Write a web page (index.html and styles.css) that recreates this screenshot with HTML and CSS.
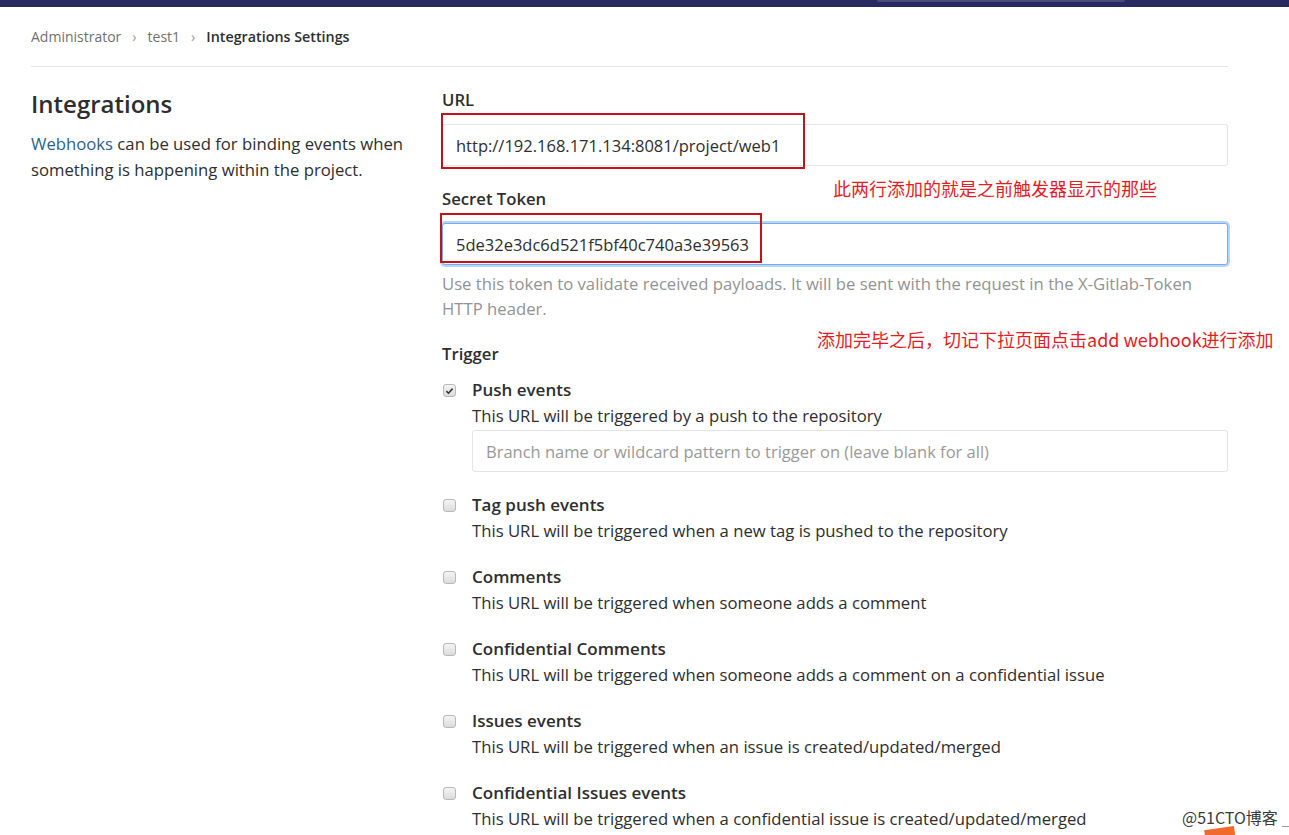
FILE: index.html
```html
<!DOCTYPE html>
<html lang="en">
<head>
<meta charset="utf-8">
<title>Integrations Settings</title>
<link rel="stylesheet" href="styles.css">
</head>
<body>
<header class="topbar"><div class="topbar-search"></div></header>
<div class="container">
  <nav class="breadcrumbs">
    <span class="crumb">Administrator</span>
    <span class="sep">&rsaquo;</span>
    <span class="crumb">test1</span>
    <span class="sep">&rsaquo;</span>
    <span class="crumb current">Integrations Settings</span>
  </nav>
  <div class="row">
    <aside class="side">
      <h4 class="side-title">Integrations</h4>
      <p class="side-text"><a class="link">Webhooks</a> can be used for binding events when something is happening within the project.</p>
    </aside>
    <form class="form">
      <div class="group">
        <label class="label">URL</label>
        <div class="input">http://192.168.171.134:8081/project/web1</div>
        <div class="redbox redbox-url"></div>
        <div class="note note-1">此两行添加的就是之前触发器显示的那些</div>
      </div>
      <div class="group group-token">
        <label class="label">Secret Token</label>
        <div class="input focused">5de32e3dc6d521f5bf40c740a3e39563</div>
        <div class="redbox redbox-token"></div>
        <p class="help">Use this token to validate received payloads. It will be sent with the request in the X-Gitlab-Token HTTP header.</p>
        <div class="note note-2">添加完毕之后，切记下拉页面点击add webhook进行添加</div>
      </div>
      <div class="label trigger">Trigger</div>
      <ul class="events">
        <li class="event">
          <span class="check checked"><svg viewBox="0 0 12 12" width="12" height="12"><path d="M2.6 6.2 L4.9 8.4 L9.4 3.4" fill="none" stroke="#333" stroke-width="1.7"/></svg></span>
          <div class="event-body">
            <div class="event-title">Push events</div>
            <div class="event-desc">This URL will be triggered by a push to the repository</div>
            <div class="input placeholder">Branch name or wildcard pattern to trigger on (leave blank for all)</div>
          </div>
        </li>
        <li class="event">
          <span class="check"></span>
          <div class="event-body">
            <div class="event-title">Tag push events</div>
            <div class="event-desc">This URL will be triggered when a new tag is pushed to the repository</div>
          </div>
        </li>
        <li class="event">
          <span class="check"></span>
          <div class="event-body">
            <div class="event-title">Comments</div>
            <div class="event-desc">This URL will be triggered when someone adds a comment</div>
          </div>
        </li>
        <li class="event">
          <span class="check"></span>
          <div class="event-body">
            <div class="event-title">Confidential Comments</div>
            <div class="event-desc">This URL will be triggered when someone adds a comment on a confidential issue</div>
          </div>
        </li>
        <li class="event">
          <span class="check"></span>
          <div class="event-body">
            <div class="event-title">Issues events</div>
            <div class="event-desc">This URL will be triggered when an issue is created/updated/merged</div>
          </div>
        </li>
        <li class="event">
          <span class="check"></span>
          <div class="event-body">
            <div class="event-title">Confidential Issues events</div>
            <div class="event-desc">This URL will be triggered when a confidential issue is created/updated/merged</div>
          </div>
        </li>
      </ul>
    </form>
  </div>
</div>
<div class="watermark">@51CTO博客</div>
<div class="wm-line"></div>
<div class="wm-logo"></div>
</body>
</html>
```
FILE: styles.css
```css
* { box-sizing: border-box; }
html, body { margin: 0; padding: 0; background: #fff; }
body {
  font-family: "Open Sans", "Noto Sans", "Noto Sans CJK SC", sans-serif;
  color: #2e2e2e;
  font-size: 16.7px;
  width: 1289px;
  height: 835px;
  overflow: hidden;
  position: relative;
}
.topbar {
  height: 7px;
  background: #292961;
  display: flex;
}
.topbar-search {
  margin-left: 877px;
  width: 248px;
  height: 2px;
  background: #4a4a7c;
  border-radius: 0 0 3px 3px;
}
.container {
  margin-left: 31px;
  width: 1197px;
}
.breadcrumbs {
  height: 60px;
  display: flex;
  align-items: center;
  gap: 9px;
  border-bottom: 1px solid #e5e5e5;
  font-size: 14px;
  padding-bottom: 1px;
}
.crumb { color: #707070; }
.crumb.current { color: #2e2e2e; font-weight: 600; font-size: 14.3px; }
.sep { color: #999; font-size: 14px; margin: 0 2px; }
.row {
  display: flex;
}
.side {
  width: 411px;
  padding-right: 20px;
}
.side-title {
  margin: 21px 0 11px;
  font-size: 24px;
  font-weight: 600;
  line-height: 32px;
  color: #2e2e2e;
}
.side-text {
  margin: 0;
  line-height: 26px;
  font-size: 16.7px;
}
.link { color: #2c5f8f; text-decoration: none; }
.form {
  width: 786px;
  margin: 0;
  padding-top: 21px;
}
.group { position: relative; }
.label {
  display: block;
  font-weight: 600;
  font-size: 16.7px;
  line-height: 24px;
  margin-bottom: 12px;
  color: #2e2e2e;
}
.input {
  height: 42px;
  border: 1px solid #e5e5e5;
  border-radius: 3px;
  padding: 0 13px;
  display: flex;
  align-items: center;
  font-size: 16.5px;
  color: #2e2e2e;
  background: #fff;
}
.input.focused {
  border-color: #73afea;
  box-shadow: 0 0 0 2px #b8d6f4;
}
.input.placeholder { color: #999; height: 42px; margin-top: 1px; }
.group-token { margin-top: 21px; }
.help {
  margin: 6px 0 0;
  color: #939393;
  line-height: 25px;
  font-size: 16.7px;
}
.redbox {
  position: absolute;
  border: 2px solid #c4121d;
  pointer-events: none;
}
.redbox-url { left: -1px; top: 25px; width: 364px; height: 56px; }
.redbox-token { left: -2px; top: 26px; width: 322px; height: 50px; }
.note {
  position: absolute;
  color: #e51c23;
  font-family: "Noto Sans CJK SC", sans-serif;
  font-size: 18px;
  line-height: 24px;
  white-space: nowrap;
}
.note-1 { left: 391px; top: 88px; }
.note-2 { left: 375px; top: 140px; }
.trigger { margin: 21px 0 11px; }
.events { list-style: none; margin: 0; padding: 0; }
.event {
  display: flex;
  margin-bottom: 20px;
}
.check {
  width: 13px;
  height: 13px;
  margin: 7px 16px 0 1px;
  border: 1px solid #b9b9b9;
  border-radius: 3px;
  background: linear-gradient(#f4f4f4, #dcdcdc);
  flex: none;
  display: flex;
  align-items: center;
  justify-content: center;
}
.check svg { display: block; }
.event-body { flex: 1; }
.event-title { font-weight: 600; line-height: 26px; font-size: 17px; }
.event-desc { line-height: 26px; }
.watermark {
  position: absolute;
  left: 1182px;
  top: 807px;
  font-family: "Noto Sans CJK SC", sans-serif;
  font-size: 16px;
  line-height: 20px;
  color: #3a3a3a;
  text-shadow: 0 0 2px #fff;
}
.wm-line {
  position: absolute;
  left: 1282px;
  top: 826px;
  width: 7px;
  height: 1px;
  background: #999;
}
.wm-logo {
  position: absolute;
  left: 1205px;
  top: 828px;
  width: 30px;
  height: 14px;
  background: #ef6a2c;
  transform: rotate(-8deg);
}
```
